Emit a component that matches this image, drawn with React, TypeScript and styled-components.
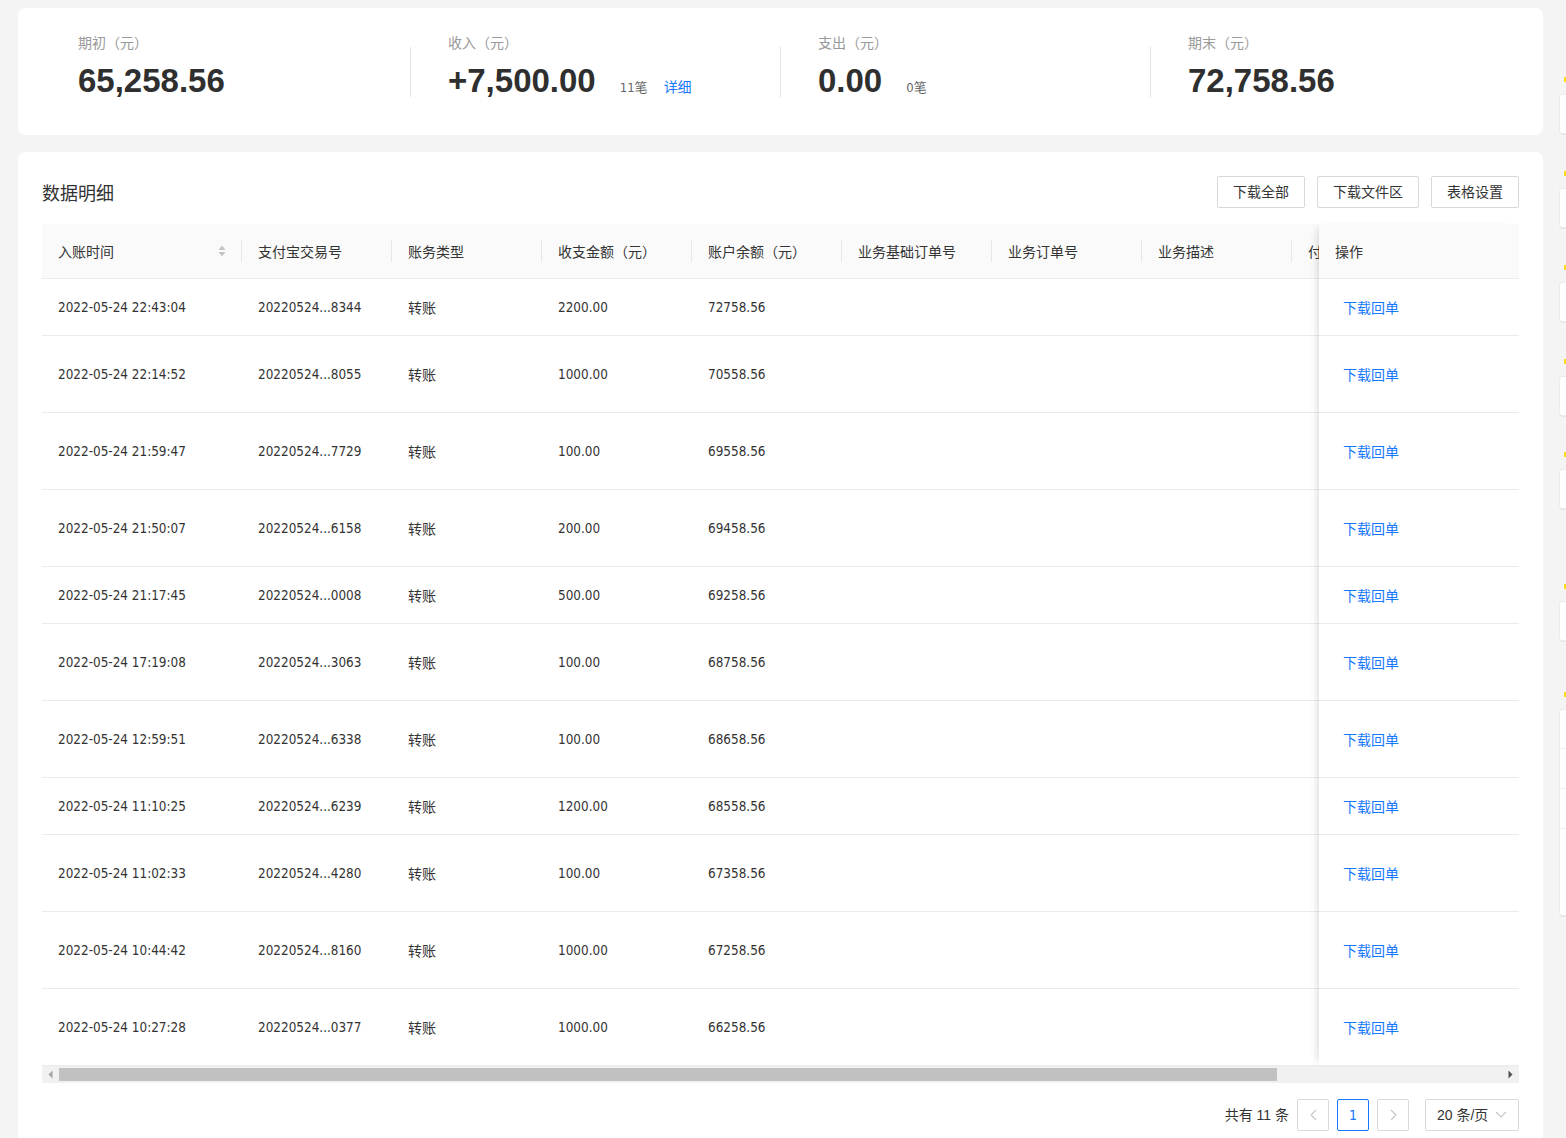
import React, { FC } from 'react';
import styled, { createGlobalStyle } from 'styled-components';

const GlobalStyle = createGlobalStyle`
  html, body {
    margin: 0;
    padding: 0;
    background: #f4f4f4;
  }
  body {
    font-family: 'Liberation Sans', 'Noto Sans CJK SC', sans-serif;
    color: #333;
  }
  * {
    box-sizing: border-box;
  }
`;

const NUM_FONT = `'DejaVu Sans Condensed', 'Liberation Sans', 'Noto Sans CJK SC', sans-serif`;

type Row = {
  time: string;
  tradeNo: string;
  amount: string;
  balance: string;
  height: number;
};

const rows: Row[] = [
  { time: '2022-05-24 22:43:04', tradeNo: '20220524...8344', amount: '2200.00', balance: '72758.56', height: 57 },
  { time: '2022-05-24 22:14:52', tradeNo: '20220524...8055', amount: '1000.00', balance: '70558.56', height: 77 },
  { time: '2022-05-24 21:59:47', tradeNo: '20220524...7729', amount: '100.00', balance: '69558.56', height: 77 },
  { time: '2022-05-24 21:50:07', tradeNo: '20220524...6158', amount: '200.00', balance: '69458.56', height: 77 },
  { time: '2022-05-24 21:17:45', tradeNo: '20220524...0008', amount: '500.00', balance: '69258.56', height: 57 },
  { time: '2022-05-24 17:19:08', tradeNo: '20220524...3063', amount: '100.00', balance: '68758.56', height: 77 },
  { time: '2022-05-24 12:59:51', tradeNo: '20220524...6338', amount: '100.00', balance: '68658.56', height: 77 },
  { time: '2022-05-24 11:10:25', tradeNo: '20220524...6239', amount: '1200.00', balance: '68558.56', height: 57 },
  { time: '2022-05-24 11:02:33', tradeNo: '20220524...4280', amount: '100.00', balance: '67358.56', height: 77 },
  { time: '2022-05-24 10:44:42', tradeNo: '20220524...8160', amount: '1000.00', balance: '67258.56', height: 77 },
  { time: '2022-05-24 10:27:28', tradeNo: '20220524...0377', amount: '1000.00', balance: '66258.56', height: 77 },
];

const columns = [
  { title: '入账时间', width: 200, sort: true },
  { title: '支付宝交易号', width: 150 },
  { title: '账务类型', width: 150 },
  { title: '收支金额（元）', width: 150 },
  { title: '账户余额（元）', width: 150 },
  { title: '业务基础订单号', width: 150 },
  { title: '业务订单号', width: 150 },
  { title: '业务描述', width: 150 },
  { title: '付', width: 150 },
];

const sideBlocks = [
  { gap: 77, height: 40 },
  { gap: 37, height: 40 },
  { gap: 37, height: 40 },
  { gap: 37, height: 40 },
  { gap: 36, height: 40 },
  { gap: 75, height: 40 },
  { gap: 51, height: 207 },
];

const HEAD_H = 55;

/* ---------- page shell ---------- */

const Page = styled.div`
  display: flex;
  gap: 16px;
  width: 1566px;
  height: 1138px;
  padding: 8px 0 0 18px;
  overflow: hidden;
`;

const Main = styled.div`
  flex: 0 0 1525px;
  display: flex;
  flex-direction: column;
  gap: 17px;
`;

const Side = styled.div`
  flex: 0 0 200px;
  display: flex;
  flex-direction: column;
`;

const SideBlock = styled.div<{ $gap: number }>`
  margin-top: ${p => p.$gap - 8}px;
  display: flex;
  flex-direction: column;
  gap: 12px;
`;

const SideTick = styled.span`
  display: block;
  width: 2px;
  height: 5px;
  margin-left: 5px;
  background: #fadb14;
`;

const SideCard = styled.div<{ $h: number }>`
  height: ${p => p.$h}px;
  background: #fff;
  border: 1px solid #ececec;
  border-radius: 3px 0 0 3px;
  box-shadow: 0 2px 0 -1px #e6e6e6;
  background-image: ${p =>
    p.$h > 60
      ? 'linear-gradient(#ececec, #ececec), linear-gradient(#ececec, #ececec), linear-gradient(#ececec, #ececec)'
      : 'none'};
  background-size: 100% 1px;
  background-repeat: no-repeat;
  background-position: 0 38px, 0 78px, 0 118px;
`;

/* ---------- summary ---------- */

const SummaryCard = styled.section`
  height: 127px;
  background: #fff;
  border-radius: 8px;
  padding: 25px 23px 0;
  display: flex;
  align-items: flex-start;
`;

const Stat = styled.div`
  width: 369px;
  padding-left: 37px;
  display: flex;
  flex-direction: column;
  gap: 8px;
`;

const StatDivider = styled.div`
  width: 1px;
  height: 50px;
  margin-top: 14px;
  background: #e3e3e3;
`;

const StatLabel = styled.div`
  font-size: 14px;
  line-height: 20px;
  color: #999;
`;

const StatValueRow = styled.div`
  display: flex;
  align-items: baseline;
`;

const StatValue = styled.span`
  font-family: 'Liberation Sans', sans-serif;
  font-weight: 700;
  font-size: 33px;
  line-height: 40px;
  color: #2f2f2f;
`;

const StatCount = styled.span`
  margin-left: 24px;
  font-size: 13px;
  color: #666;
  font-family: ${NUM_FONT};
`;

const StatLink = styled.a`
  margin-left: 16px;
  font-size: 14px;
  color: #1677ff;
  cursor: pointer;
`;

/* ---------- detail card ---------- */

const DetailCard = styled.section`
  flex: 1;
  background: #fff;
  border-radius: 8px 8px 0 0;
  padding: 24px 24px 0;
`;

const CardHead = styled.div`
  display: flex;
  align-items: center;
  justify-content: space-between;
  height: 32px;
  margin-bottom: 16px;
`;

const CardTitle = styled.h2`
  margin: 0;
  font-size: 18px;
  font-weight: 400;
  color: #333;
`;

const Actions = styled.div`
  display: flex;
  gap: 12px;
`;

const Button = styled.button`
  height: 32px;
  padding: 0 15px 2px;
  border: 1px solid #d9d9d9;
  border-radius: 2px;
  background: #fff;
  font-family: inherit;
  font-size: 14px;
  color: #333;
  cursor: pointer;
`;

/* ---------- table ---------- */

const Table = styled.div`
  display: flex;
  width: 1477px;
`;

const ScrollPart = styled.div`
  flex: 1;
  overflow: hidden;
`;

const FixedPart = styled.div`
  flex: 0 0 200px;
  position: relative;
  z-index: 1;
  box-shadow: -6px 0 8px -5px rgba(0, 0, 0, 0.16);
`;

const TRow = styled.div<{ $h: number; $head?: boolean }>`
  display: flex;
  height: ${p => p.$h}px;
  border-bottom: 1px solid #ebebeb;
  background: ${p => (p.$head ? '#fafafa' : '#fff')};
`;

const Cell = styled.div<{ $w: number }>`
  flex: 0 0 ${p => p.$w}px;
  display: flex;
  align-items: center;
  padding: 0 16px;
  font-size: 14px;
  color: #333;
  white-space: nowrap;
`;

const HeadCell = styled(Cell)`
  position: relative;
  justify-content: space-between;
  padding-bottom: 1px;

  &::after {
    content: '';
    position: absolute;
    right: 0;
    top: 50%;
    width: 1px;
    height: 22px;
    margin-top: -11px;
    background: #e8e8e8;
  }
`;

const NumText = styled.span`
  font-family: ${NUM_FONT};
  font-size: 13.4px;
`;

const FixedCell = styled(TRow)<{ $pad: number }>`
  align-items: center;
  padding-left: ${p => p.$pad}px;
  padding-bottom: 1px;
  font-size: 14px;
  color: #333;
`;

const LinkText = styled.a`
  color: #1677ff;
  cursor: pointer;
`;

const ScrollBar = styled.div`
  display: flex;
  align-items: center;
  width: 1477px;
  height: 17px;
  background: #f1f1f1;
`;

const ScrollArrow = styled.span`
  flex: 0 0 17px;
  display: flex;
  align-items: center;
  justify-content: center;
`;

const ScrollTrack = styled.div`
  flex: 1;
  height: 13px;
`;

const ScrollThumb = styled.div`
  height: 100%;
  background: #c1c1c1;
`;

/* ---------- pagination ---------- */

const Pager = styled.div`
  display: flex;
  align-items: center;
  justify-content: flex-end;
  gap: 8px;
  width: 1477px;
  margin-top: 16px;
`;

const Total = styled.span`
  font-size: 14px;
  color: #333;
  padding-bottom: 2px;
`;

const PageBox = styled.span<{ $active?: boolean }>`
  display: flex;
  align-items: center;
  justify-content: center;
  width: 32px;
  height: 32px;
  border: 1px solid ${p => (p.$active ? '#1677ff' : '#d9d9d9')};
  border-radius: 2px;
  color: ${p => (p.$active ? '#1677ff' : '#ccc')};
  font-size: 14px;
  font-family: ${NUM_FONT};
`;

const SizeSelect = styled.span`
  display: flex;
  align-items: center;
  justify-content: space-between;
  width: 94px;
  height: 32px;
  margin-left: 8px;
  padding: 0 11px 2px 11px;
  border: 1px solid #d9d9d9;
  border-radius: 2px;
  font-size: 14px;
  color: #333;
`;

/* ---------- icons ---------- */

const SortIcon: FC = () => (
  <svg width="8" height="12" viewBox="0 0 8 12">
    <path d="M4 0.5 L7.5 5 L0.5 5 Z" fill="#c4c4c4" />
    <path d="M4 11.5 L7.5 7 L0.5 7 Z" fill="#c4c4c4" />
  </svg>
);

const Chevron: FC<{ dir: 'left' | 'right' | 'down'; color?: string }> = ({ dir, color = '#c6c6c6' }) => {
  const d =
    dir === 'left' ? 'M7 1 L2 6 L7 11' : dir === 'right' ? 'M2 1 L7 6 L2 11' : 'M1 3 L6 8 L11 3';
  const size = dir === 'down' ? { w: 12, h: 11 } : { w: 9, h: 12 };
  return (
    <svg width={size.w} height={size.h} viewBox={`0 0 ${size.w} ${size.h}`}>
      <path d={d} fill="none" stroke={color} strokeWidth="1.1" />
    </svg>
  );
};

const Triangle: FC<{ dir: 'left' | 'right'; color: string }> = ({ dir, color }) => (
  <svg width="5" height="9" viewBox="0 0 5 9">
    <path d={dir === 'left' ? 'M4.5 0.5 L0.5 4.5 L4.5 8.5 Z' : 'M0.5 0.5 L4.5 4.5 L0.5 8.5 Z'} fill={color} />
  </svg>
);

/* ---------- page ---------- */

const stats = [
  { label: '期初（元）', value: '65,258.56' },
  { label: '收入（元）', value: '+7,500.00', count: '11笔', link: '详细' },
  { label: '支出（元）', value: '0.00', count: '0笔' },
  { label: '期末（元）', value: '72,758.56' },
];

const App: FC = () => {
  return (
    <>
      <GlobalStyle />
      <Page>
        <Main>
          <SummaryCard>
            {stats.map((s, i) => (
              <React.Fragment key={s.label}>
                {i > 0 && <StatDivider />}
                <Stat>
                  <StatLabel>{s.label}</StatLabel>
                  <StatValueRow>
                    <StatValue>{s.value}</StatValue>
                    {s.count && <StatCount>{s.count}</StatCount>}
                    {s.link && <StatLink>{s.link}</StatLink>}
                  </StatValueRow>
                </Stat>
              </React.Fragment>
            ))}
          </SummaryCard>

          <DetailCard>
            <CardHead>
              <CardTitle>数据明细</CardTitle>
              <Actions>
                <Button>下载全部</Button>
                <Button>下载文件区</Button>
                <Button>表格设置</Button>
              </Actions>
            </CardHead>

            <Table>
              <ScrollPart>
                <TRow $h={HEAD_H} $head>
                  {columns.map(c => (
                    <HeadCell key={c.title} $w={c.width}>
                      <span>{c.title}</span>
                      {c.sort && <SortIcon />}
                    </HeadCell>
                  ))}
                </TRow>
                {rows.map(r => (
                  <TRow key={r.time} $h={r.height}>
                    <Cell $w={200}>
                      <NumText>{r.time}</NumText>
                    </Cell>
                    <Cell $w={150}>
                      <NumText>{r.tradeNo}</NumText>
                    </Cell>
                    <Cell $w={150}>转账</Cell>
                    <Cell $w={150}>
                      <NumText>{r.amount}</NumText>
                    </Cell>
                    <Cell $w={150}>
                      <NumText>{r.balance}</NumText>
                    </Cell>
                    <Cell $w={150} />
                    <Cell $w={150} />
                    <Cell $w={150} />
                    <Cell $w={150} />
                  </TRow>
                ))}
              </ScrollPart>

              <FixedPart>
                <FixedCell $h={HEAD_H} $head $pad={16}>
                  操作
                </FixedCell>
                {rows.map(r => (
                  <FixedCell key={r.time} $h={r.height} $pad={24}>
                    <LinkText>下载回单</LinkText>
                  </FixedCell>
                ))}
              </FixedPart>
            </Table>

            <ScrollBar>
              <ScrollArrow>
                <Triangle dir="left" color="#a3a3a3" />
              </ScrollArrow>
              <ScrollTrack>
                <ScrollThumb style={{ width: `${(1218 / 1443) * 100}%` }} />
              </ScrollTrack>
              <ScrollArrow>
                <Triangle dir="right" color="#505050" />
              </ScrollArrow>
            </ScrollBar>

            <Pager>
              <Total>共有 11 条</Total>
              <PageBox>
                <Chevron dir="left" />
              </PageBox>
              <PageBox $active>1</PageBox>
              <PageBox>
                <Chevron dir="right" />
              </PageBox>
              <SizeSelect>
                <span>20 条/页</span>
                <Chevron dir="down" />
              </SizeSelect>
            </Pager>
          </DetailCard>
        </Main>

        <Side>
          {sideBlocks.map((b, i) => (
            <SideBlock key={i} $gap={i === 0 ? b.gap : b.gap + 8}>
              <SideTick />
              <SideCard $h={b.height} />
            </SideBlock>
          ))}
        </Side>
      </Page>
    </>
  );
};

export default App;
